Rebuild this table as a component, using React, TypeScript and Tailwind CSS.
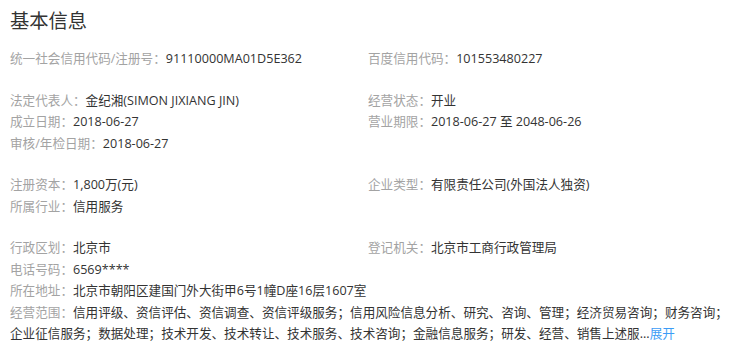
const font = "font-['Open_Sans','Noto_Sans_CJK_SC',sans-serif]";

type Item = { label: string; value: string };

function Field({ label, value }: Item) {
  return (
    <div className="whitespace-nowrap">
      <span className="text-[#a3a3a3]">{label}：</span>
      <span className="text-[#333]">{value}</span>
    </div>
  );
}

function Group({ left, right }: { left: Item[]; right: Item[] }) {
  return (
    <div className="mb-[20px] grid grid-cols-[358px_1fr]">
      <div>
        {left.map((it) => (
          <Field key={it.label} {...it} />
        ))}
      </div>
      <div>
        {right.map((it) => (
          <Field key={it.label} {...it} />
        ))}
      </div>
    </div>
  );
}

export default function App() {
  return (
    <div className={`${font} min-h-screen bg-white px-[10px] pt-[7px] text-[12.6px] leading-[21.5px]`}>
      <h2 className="mb-[13px] text-[19.3px] leading-[28px] text-[#333]">基本信息</h2>

      <Group
        left={[{ label: '统一社会信用代码/注册号', value: '91110000MA01D5E362' }]}
        right={[{ label: '百度信用代码', value: '101553480227' }]}
      />
      <Group
        left={[
          { label: '法定代表人', value: '金纪湘(SIMON JIXIANG JIN)' },
          { label: '成立日期', value: '2018-06-27' },
          { label: '审核/年检日期', value: '2018-06-27' },
        ]}
        right={[
          { label: '经营状态', value: '开业' },
          { label: '营业期限', value: '2018-06-27 至 2048-06-26' },
        ]}
      />
      <Group
        left={[
          { label: '注册资本', value: '1,800万(元)' },
          { label: '所属行业', value: '信用服务' },
        ]}
        right={[{ label: '企业类型', value: '有限责任公司(外国法人独资)' }]}
      />

      <div className="grid grid-cols-[358px_1fr]">
        <div>
          <Field label="行政区划" value="北京市" />
          <Field label="电话号码" value="6569****" />
        </div>
        <div>
          <Field label="登记机关" value="北京市工商行政管理局" />
        </div>
      </div>
      <Field label="所在地址" value="北京市朝阳区建国门外大街甲6号1幢D座16层1607室" />
      <Field
        label="经营范围"
        value="信用评级、资信评估、资信调查、资信评级服务；信用风险信息分析、研究、咨询、管理；经济贸易咨询；财务咨询；"
      />
      <div className="whitespace-nowrap text-[#333]">
        企业征信服务；数据处理；技术开发、技术转让、技术服务、技术咨询；金融信息服务；研发、经营、销售上述服...
        <span className="cursor-pointer text-[#3c9cf6]">展开</span>
      </div>
    </div>
  );
}
